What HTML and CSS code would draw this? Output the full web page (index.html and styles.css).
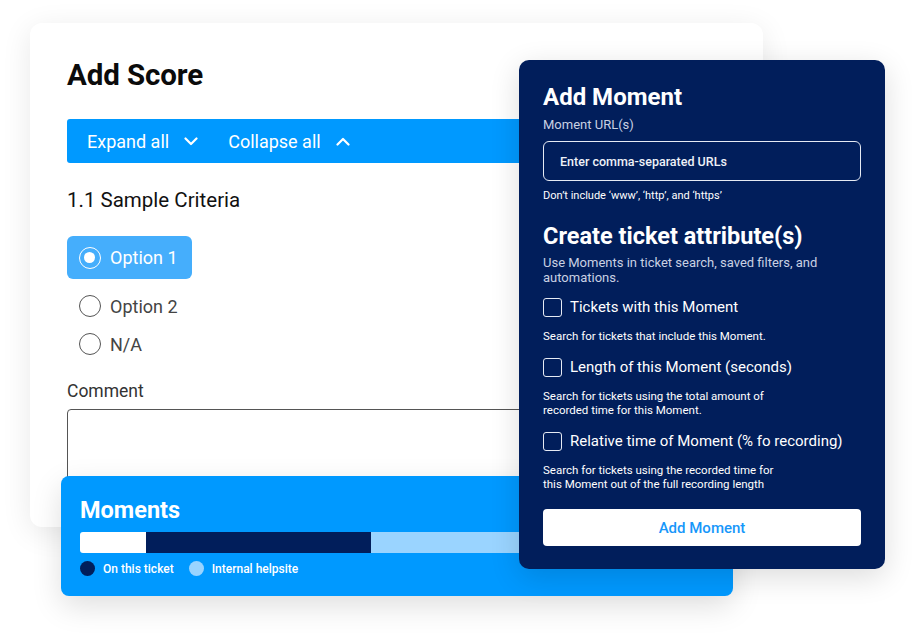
FILE: index.html
```html
<!DOCTYPE html>
<html>
<head>
<meta charset="utf-8">
<link rel="stylesheet" href="styles.css">
</head>
<body>
<div class="stage">
  <section class="score-card">
    <h1 class="score-title">Add Score</h1>
    <div class="toolbar">
      <span class="tool">Expand all
        <svg class="chev" width="14" height="9" viewBox="0 0 14 9"><path d="M1.5 1.5 L7 7 L12.5 1.5" fill="none" stroke="#fff" stroke-width="2.2" stroke-linecap="round" stroke-linejoin="round"/></svg>
      </span>
      <span class="tool">Collapse all
        <svg class="chev" width="14" height="9" viewBox="0 0 14 9"><path d="M1.5 7.5 L7 2 L12.5 7.5" fill="none" stroke="#fff" stroke-width="2.2" stroke-linecap="round" stroke-linejoin="round"/></svg>
      </span>
    </div>
    <h2 class="criteria">1.1 Sample Criteria</h2>
    <div class="options">
      <div class="option selected"><span class="radio"></span>Option 1</div>
      <div class="option"><span class="radio"></span>Option 2</div>
      <div class="option"><span class="radio"></span>N/A</div>
    </div>
    <div class="comment-label">Comment</div>
    <div class="textarea"></div>
  </section>

  <section class="moments-card">
    <h2 class="moments-title">Moments</h2>
    <div class="mbar">
      <span class="seg seg-white" style="width:66px"></span>
      <span class="seg seg-navy" style="width:225px"></span>
      <span class="seg seg-light"></span>
    </div>
    <div class="legend">
      <span class="dot dot-navy"></span><span class="legend-text">On this ticket</span>
      <span class="dot dot-light"></span><span class="legend-text">Internal helpsite</span>
    </div>
  </section>

  <section class="moment-panel">
    <h2 class="panel-title">Add Moment</h2>
    <div class="field-label">Moment URL(s)</div>
    <div class="url-input">Enter comma-separated URLs</div>
    <div class="hint">Don’t include ‘www’, ‘http’, and ‘https’</div>
    <h2 class="panel-sub">Create ticket attribute(s)</h2>
    <p class="panel-desc">Use Moments in ticket search, saved filters, and automations.</p>
    <div class="check-row first"><span class="box"></span>Tickets with this Moment</div>
    <p class="check-help">Search for tickets that include this Moment.</p>
    <div class="check-row"><span class="box"></span>Length of this Moment (seconds)</div>
    <p class="check-help">Search for tickets using the total amount of<br>recorded time for this Moment.</p>
    <div class="check-row"><span class="box"></span>Relative time of Moment (% fo recording)</div>
    <p class="check-help">Search for tickets using the recorded time for<br>this Moment out of the full recording length</p>
    <div class="add-btn">Add Moment</div>
  </section>
</div>
</body>
</html>
```

FILE: styles.css
```css
* { box-sizing: border-box; }
html, body { margin: 0; padding: 0; background: #fff; }
body { font-family: Roboto, "Noto Sans", sans-serif; }
.stage { position: relative; width: 915px; height: 634px; overflow: hidden; }

.score-card {
  position: absolute; left: 30px; top: 23px; width: 733px; height: 504px;
  background: #fff; border-radius: 12px;
  box-shadow: 0 6px 30px rgba(0,0,0,0.09);
  padding: 34px 37px 0 37px;
}
.score-title { margin: 0; font-size: 29.5px; font-weight: 700; line-height: 36px; color: #0b0b0b; letter-spacing: -0.1px; }
.toolbar {
  margin-top: 26px; height: 44px; background: #0099ff; border-radius: 3px;
  display: flex; align-items: center; padding-left: 20px; gap: 30px;
}
.tool { display: flex; align-items: center; gap: 15px; color: #fff; font-size: 18px; }
.chev { display: block; margin-top: 1px; }
.criteria { margin: 24px 0 0 0; font-size: 20.5px; font-weight: 400; line-height: 26px; color: #111; }
.options { margin-top: 23px; display: flex; flex-direction: column; align-items: flex-start; }
.option {
  display: flex; align-items: center; gap: 9px; height: 38px; padding: 0 15px 0 12px;
  font-size: 18px; color: #444; border-radius: 6px;
}
.option:nth-child(2) { margin-top: 8px; }
.option.selected { background: #45aefc; color: #fff; height: 43px; padding-right: 14px; }
.radio {
  width: 22px; height: 22px; border-radius: 50%; border: 1.5px solid #555;
  flex: none; position: relative;
}
.option.selected .radio { border-color: #fff; }
.option.selected .radio::after {
  content: ""; position: absolute; left: 4px; top: 4px; width: 11px; height: 11px;
  border-radius: 50%; background: #fff;
}
.comment-label { margin-top: 17px; font-size: 17.5px; color: #333; line-height: 22px; }
.textarea { margin-top: 7px; height: 110px; border: 1.5px solid #555; border-radius: 4px; }

.moments-card {
  position: absolute; left: 61px; top: 476px; width: 672px; height: 120px;
  background: #0099ff; border-radius: 8px;
  box-shadow: 0 10px 30px rgba(0,0,0,0.13);
  padding: 20px 19px 0 19px;
}
.moments-title { margin: 0; color: #fff; font-size: 23.5px; font-weight: 700; line-height: 28px; }
.mbar { margin-top: 8px; height: 21px; display: flex; border-radius: 3px; overflow: hidden; }
.seg { display: block; height: 100%; }
.seg-white { background: #fff; }
.seg-navy { background: #011e5b; }
.seg-light { background: #9ad4ff; flex: 1; }
.legend { margin-top: 8px; display: flex; align-items: center; }
.dot { width: 15px; height: 15px; border-radius: 50%; flex: none; }
.dot-navy { background: #011e5b; }
.dot-light { background: #9ad4ff; margin-left: 15px; }
.legend-text { color: #fff; font-size: 12px; font-weight: 500; margin-left: 8px; }

.moment-panel {
  position: absolute; left: 519px; top: 60px; width: 366px; height: 509px;
  background: #011e5b; border-radius: 10px;
  box-shadow: 0 8px 30px rgba(0,0,0,0.14);
  padding: 23px 24px 0 24px; color: #fff;
}
.panel-title { margin: 0; font-size: 24px; font-weight: 700; line-height: 28px; }
.field-label { margin-top: 6px; font-size: 13px; color: #c9d1e3; line-height: 16px; }
.url-input {
  margin-top: 8px; height: 40px; border: 1.5px solid #e6eaf3; border-radius: 6px;
  display: flex; align-items: center; padding-left: 16px;
  font-size: 12.5px; color: #eef1f8; font-weight: 500;
}
.hint { margin-top: 8px; font-size: 11px; line-height: 14px; color: #fff; }
.panel-sub { margin: 18px 0 0 0; font-size: 23.5px; font-weight: 700; line-height: 30px; }
.panel-desc { margin: 4px 0 0 0; width: 285px; font-size: 13px; line-height: 15px; color: #c9d1e3; }
.check-row { margin-top: 14px; display: flex; align-items: center; gap: 8px; font-size: 15px; line-height: 20px; font-weight: 400; }
.check-row.first { margin-top: 12px; }
.box { width: 19px; height: 19px; border: 1.5px solid #e6eaf3; border-radius: 3px; flex: none; }
.check-help { margin: 12px 0 0 0; font-size: 11.5px; line-height: 14px; color: #fff; }
.add-btn {
  margin-top: 18px; height: 37px; background: #fff; border-radius: 4px;
  display: flex; align-items: center; justify-content: center;
  color: #1797fa; font-size: 15px; font-weight: 500;
}
```
